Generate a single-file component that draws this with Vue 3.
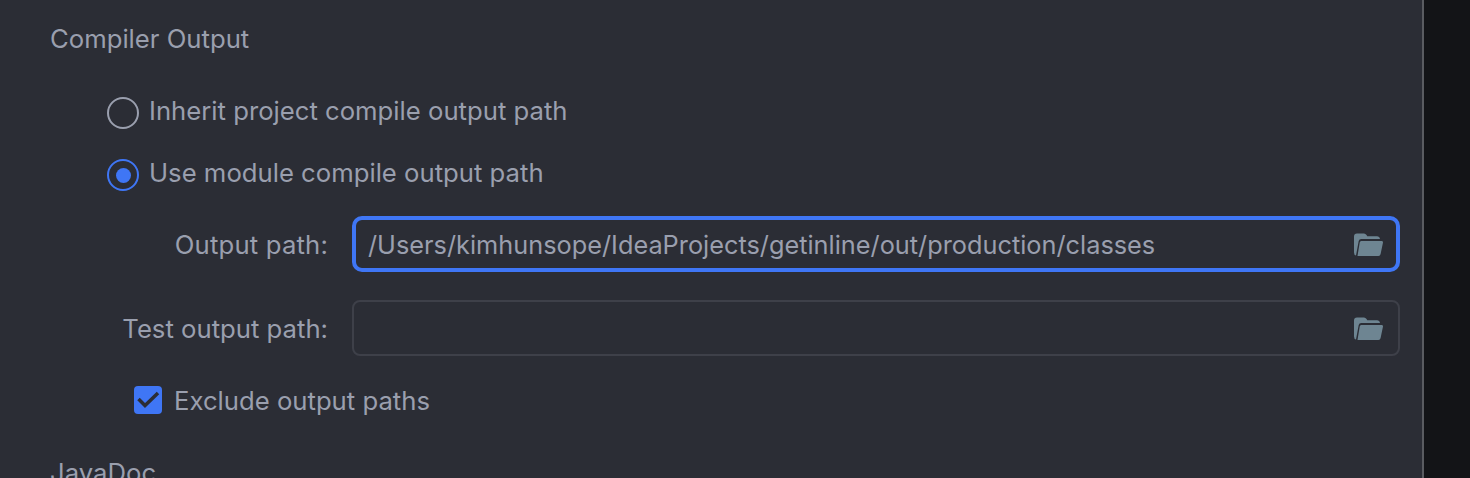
<script setup>
const folderBack = 'M0 3.500Q0 0.500 3 0.500H10Q11.500 0.500 12.500 2L13.300 3.200H23Q25.500 3.200 26 6H7.200Q5.200 6 4.700 8L2 22.500Q0 22 0 19.500Z'
const folderFront = 'M7.200 8H27.800Q29.300 8 29 9.500L26.600 21Q26.200 23 24.500 23H3.500L5.700 9.500Q6 8 7.200 8Z'
</script>

<template>
  <div class="page">
    <main class="panel">
      <h2 class="section-title">Compiler Output</h2>

      <div class="options">
        <label class="radio-row first">
          <span class="radio"></span>
          <span class="radio-text">Inherit project compile output path</span>
        </label>
        <label class="radio-row second">
          <span class="radio selected"><span class="dot"></span></span>
          <span class="radio-text">Use module compile output path</span>
        </label>

        <div class="path-row focused-row">
          <span class="path-label output-label">Output path:</span>
          <div class="field focused">
            <span class="field-value">/Users/kimhunsope/IdeaProjects/getinline/out/production/classes</span>
            <svg class="folder" width="30" height="23" viewBox="0 0 30 23">
              <path :d="folderBack" fill="#6e8592" />
              <path :d="folderFront" fill="#6e8592" />
            </svg>
          </div>
        </div>

        <div class="path-row test-row">
          <span class="path-label">Test output path:</span>
          <div class="field">
            <span class="field-value"></span>
            <svg class="folder" width="30" height="23" viewBox="0 0 30 23">
              <path :d="folderBack" fill="#6e8592" />
              <path :d="folderFront" fill="#6e8592" />
            </svg>
          </div>
        </div>

        <label class="check-row">
          <span class="checkbox">
            <svg width="28" height="28" viewBox="0 0 28 28">
              <path d="M4.500 13L11 19.500L24 7" fill="none" stroke="#2b2d35" stroke-width="3.500" />
            </svg>
          </span>
          <span>Exclude output paths</span>
        </label>
      </div>

      <h2 class="section-title javadoc">JavaDoc</h2>
    </main>
    <div class="side"></div>
  </div>
</template>

<style scoped>
.page {
  display: flex;
  width: 1470px;
  height: 478px;
  overflow: hidden;
  background: #2b2d35;
  font-family: Inter, "Liberation Sans", sans-serif;
  font-size: 25.7px;
  color: #9a9fae;
}

.panel {
  width: 1424px;
  flex-shrink: 0;
  box-sizing: border-box;
  padding: 24px 22px 0 50px;
  border-right: 2px solid #5a5c61;
}

.section-title {
  margin: 0;
  font-size: 25.7px;
  font-weight: 400;
  line-height: 30px;
}

.options {
  margin-top: 43px;
  padding-left: 57px;
}

.radio-row {
  display: flex;
  align-items: center;
  gap: 10px;
  height: 32px;
}

.radio-text {
  position: relative;
  top: -3px;
}

.second {
  margin-top: 30px;
}

.radio {
  box-sizing: border-box;
  width: 32px;
  height: 32px;
  border: 2px solid #9a9fae;
  border-radius: 50%;
  display: flex;
  align-items: center;
  justify-content: center;
  flex-shrink: 0;
}

.radio.selected {
  border-color: #3f76f5;
}

.dot {
  width: 15px;
  height: 15px;
  border-radius: 50%;
  background: #3f76f5;
}

.path-row {
  display: flex;
  align-items: center;
  gap: 24px;
  margin-left: -57px;
}

.focused-row {
  margin-top: 25px;
}

.test-row {
  margin-top: 28px;
}

.path-label {
  width: 278px;
  text-align: right;
  flex-shrink: 0;
}

.output-label {
  letter-spacing: 0.17px;
}

.field {
  box-sizing: border-box;
  flex: 1;
  height: 56px;
  border: 2px solid #3e4049;
  border-radius: 8px;
  display: flex;
  align-items: center;
  justify-content: space-between;
  padding: 0 14px;
}

.field.focused {
  border: 4px solid #3f76f5;
  border-radius: 10px;
  padding: 0 12px;
}

.field-value {
  font-size: 25.32px;
}

.folder {
  flex-shrink: 0;
}

.check-row {
  display: flex;
  align-items: center;
  gap: 12px;
  margin-top: 29px;
  margin-left: 27px;
  height: 30px;
}

.checkbox {
  width: 28px;
  height: 28px;
  border-radius: 4px;
  background: #3f76f5;
  flex-shrink: 0;
}

.checkbox svg {
  display: block;
}

.javadoc {
  margin-top: 43px;
}

.side {
  flex: 1;
  background: #131417;
}
</style>
